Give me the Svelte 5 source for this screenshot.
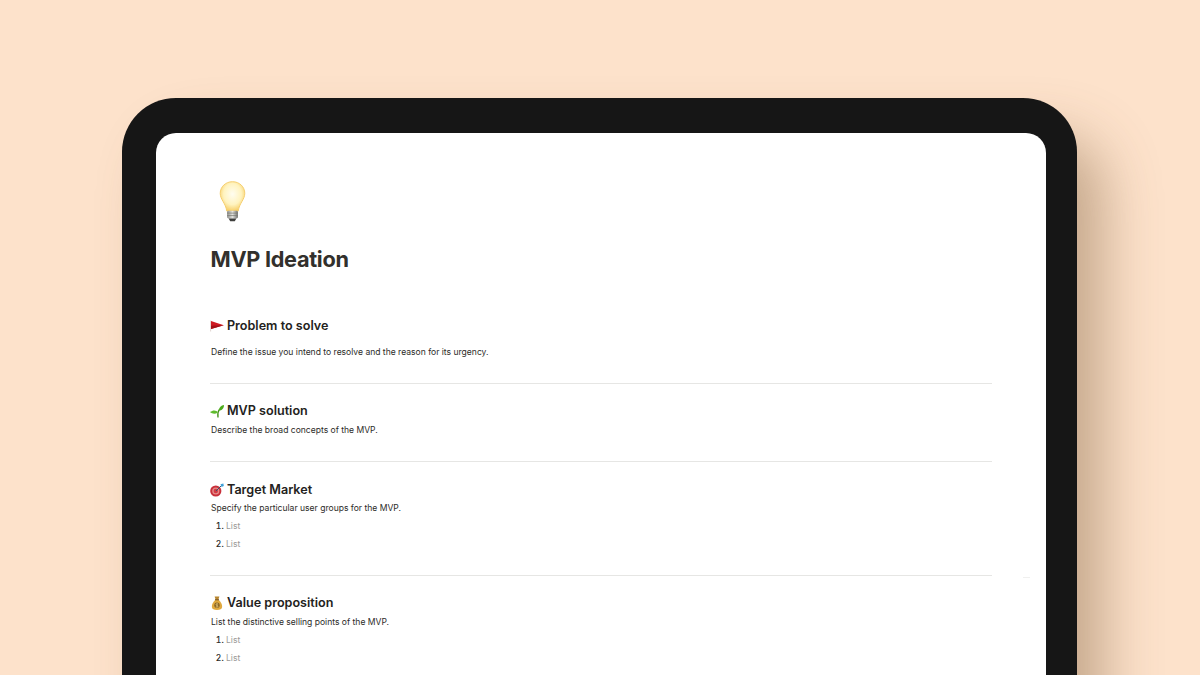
<script>
  const sections = [
    { title: 'MVP solution', icon: 'sprout', desc: 'Describe the broad concepts of the MVP.', list: false, cls: 'tight' },
    { title: 'Target Market', icon: 'target', desc: 'Specify the particular user groups for the MVP.', list: true, cls: 'flush' },
    { title: 'Value proposition', icon: 'bag', desc: 'List the distinctive selling points of the MVP.', list: true, cls: 'tight' }
  ];
</script>

{#snippet emoji(name)}
  <svg class="emoji" viewBox="0 0 14 14" aria-hidden="true">
    {#if name === 'flag'}
      <path d="M.6 1.500v11" stroke="#d9cbc5" stroke-width=".8" />
      <path d="M1 2 13.800 6.300 1 10z" fill="#cf1a22" />
      <path d="M1 6.800 13.800 6.300 1 10z" fill="#a11017" />
    {:else if name === 'sprout'}
      <path d="M8 13.500c-.5-3.200-.2-5.800 1.300-8" stroke="#3f8f16" stroke-width="1.300" fill="none" />
      <path d="M8.700 6.600C9.200 3.200 11 1.400 14 1c0 3.400-2 5.600-5.300 5.600z" fill="#4cab1b" />
      <path d="M7.800 8.400C6.600 6 3 5.700 0 8c2.400 2.200 5.500 2.200 7.800.4z" fill="#5fbc2c" />
    {:else if name === 'target'}
      <circle cx="5.800" cy="8" r="5.600" fill="#c8303a" />
      <circle cx="5.800" cy="8" r="3.600" fill="#e58a88" />
      <circle cx="5.800" cy="8" r="2.200" fill="#d03a44" />
      <path d="M6 8 11.200 2.800" stroke="#36586e" stroke-width="1" />
      <path d="M10.500 1.200 13.400.6l.4 2.400-2.300 1z" fill="#3fa0d8" />
    {:else}
      <path d="M4.600 .6h4.800L8.300 3.800H5.700z" fill="#b8862f" />
      <path d="M5.400 3.800h3.200C11 6 12.300 8.600 12.100 11c-.2 2.200-2 3-5.100 3s-4.900-.8-5.100-3C1.700 8.600 3 6 5.400 3.800z" fill="#e0a93f" />
      <rect x="5" y="3.200" width="4" height="1.100" fill="#7a5520" />
      <circle cx="7" cy="9.300" r="2.700" fill="#8a6424" />
      <path d="M8.100 8.200C7.400 7.600 5.900 7.800 5.900 8.700s2.200.7 2.200 1.500-1.400 1.100-2.200.5M7 7.100v4.400" stroke="#f1d488" stroke-width=".55" fill="none" />
    {/if}
  </svg>
{/snippet}

<div class="page">
  <div class="tablet">
    <div class="screen">
      <div class="doc">
        <svg class="bulb" viewBox="0 0 30 44" aria-hidden="true">
          <defs>
            <radialGradient id="glass" cx="50%" cy="42%" r="58%">
              <stop offset="0" stop-color="#fffdf0" />
              <stop offset=".62" stop-color="#fff3bf" />
              <stop offset="1" stop-color="#f7cf68" />
            </radialGradient>
            <linearGradient id="base" x1="0" x2="1" y1="0" y2="0">
              <stop offset="0" stop-color="#8f8f8c" />
              <stop offset=".5" stop-color="#e2e2de" />
              <stop offset="1" stop-color="#6f6f6c" />
            </linearGradient>
          </defs>
          <path d="M15 1C7.800 1 2.300 6.300 2.300 13c0 6.600 5.600 10 6.800 18.400h11.800C22.100 23 27.700 19.600 27.700 13 27.700 6.300 22.200 1 15 1z" fill="url(#glass)" stroke="#f5cd6c" stroke-width="1" />
          <rect x="9.400" y="31" width="11.200" height="8" rx="1.500" fill="url(#base)" />
          <path d="M9.400 33.500h11.200M9.400 36h11.200" stroke="#77776f" stroke-width=".7" />
          <path d="M11 39h8l-1.600 3h-4.800z" fill="#3f3f3d" />
        </svg>
        <h1>MVP Ideation</h1>

        <h2 class="first">{@render emoji('flag')}Problem to solve</h2>
        <p class="gap">Define the issue you intend to resolve and the reason for its urgency.</p>

        {#each sections as s}
          <hr />
          <h2 class={s.cls}>{@render emoji(s.icon)}{s.title}</h2>
          <p>{s.desc}</p>
          {#if s.list}
            <ol>
              <li><span>List</span></li>
              <li><span>List</span></li>
            </ol>
          {/if}
        {/each}
      </div>
      <div class="handle"></div>
    </div>
  </div>
</div>

<style>
  :global(body) {
    margin: 0;
    background: #fde2cb;
  }
  .page {
    width: 1200px;
    height: 675px;
    overflow: hidden;
    box-sizing: border-box;
    padding: 98px 0 0 122px;
    background: #fde2cb;
    font-family: Inter, "Liberation Sans", sans-serif;
  }
  .tablet {
    width: 955px;
    height: 700px;
    box-sizing: border-box;
    padding: 35px 31px 0 34px;
    background: #161616;
    border-radius: 54px 54px 0 0;
    box-shadow: 30px 36px 56px -4px rgba(120, 85, 50, 0.42);
  }
  .screen {
    position: relative;
    height: 100%;
    background: #fff;
    border-radius: 20px 20px 0 0;
    box-sizing: border-box;
    padding: 47px 54px 0 54px;
  }
  .doc {
    display: flex;
    flex-direction: column;
    align-items: stretch;
  }
  .bulb {
    display: block;
    width: 29px;
    height: 44px;
    margin-left: 8px;
  }
  h1 {
    margin: 20px 0 0 0.5px;
    font-size: 21.700px;
    line-height: 30px;
    font-weight: 700;
    letter-spacing: -0.3px;
    color: #32302c;
  }
  h2 {
    display: flex;
    align-items: center;
    margin: 17px 0 0 0;
    font-size: 12.600px;
    line-height: 20px;
    font-weight: 600;
    color: #232220;
  }
  h2.first { margin-top: 42px; }
  h2.flush { margin-top: 18px; }
  .emoji {
    width: 14px;
    height: 14px;
    margin-right: 3px;
    flex: none;
  }
  p {
    margin: 0 0 0 1px;
    font-size: 8.550px;
    line-height: 17px;
    color: #2c2b28;
  }
  h2.tight + p { margin-top: 1px; }
  p.gap { margin-top: 8px; }
  hr {
    width: 782px;
    height: 1px;
    margin: 22px 0 0;
    border: 0;
    background: #e6e6e4;
  }
  ol {
    margin: 0 0 0 1px;
    padding: 0 0 0 15px;
    font-size: 8.550px;
    line-height: 18px;
    font-weight: 500;
    color: #2c2b28;
  }
  li::marker { font-weight: 500; }
  li span {
    font-weight: 400;
    color: #9b9a97;
  }
  .handle {
    position: absolute;
    left: 867px;
    top: 444px;
    width: 7px;
    height: 1px;
    background: #f0f0ef;
  }
</style>
